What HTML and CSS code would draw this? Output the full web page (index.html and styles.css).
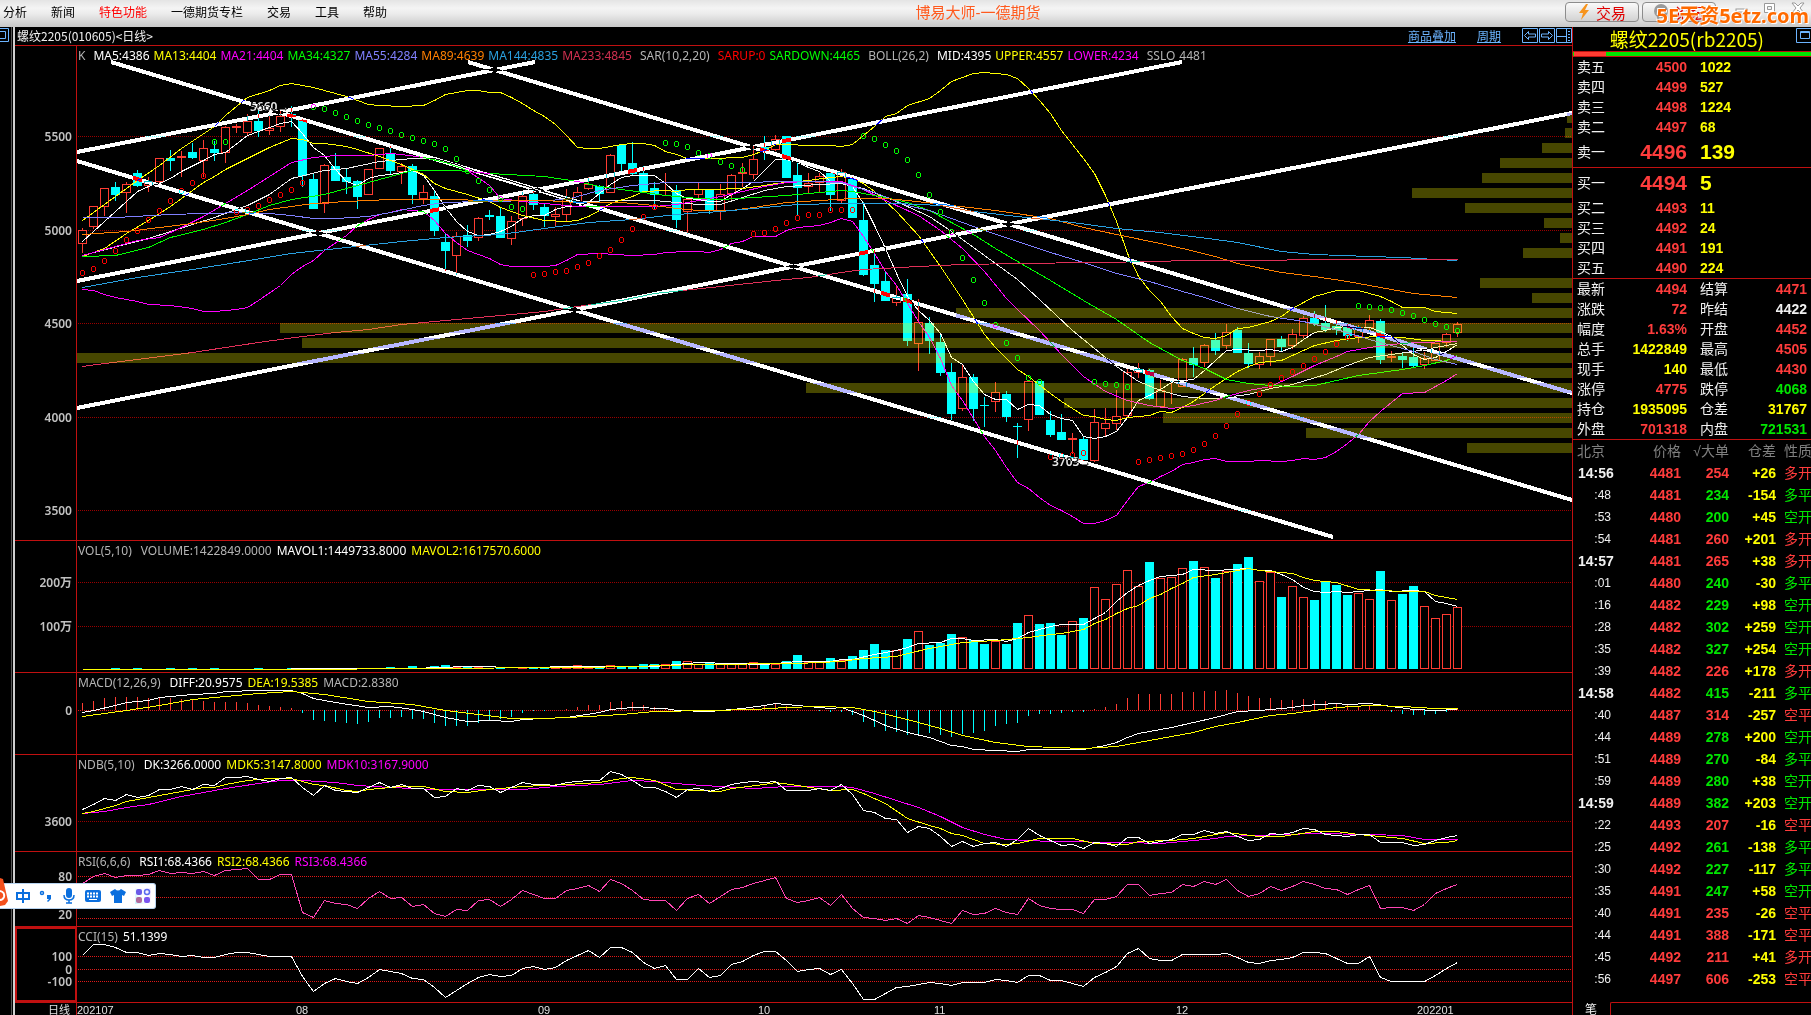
FILE: index.html
```html
<!DOCTYPE html>
<html lang="zh-CN">
<head>
    <meta charset="utf-8">
    <title>博易大师-一德期货</title>
    <link rel="stylesheet" href="styles.css">
</head>
<body>
    <header class="topbar">
        <nav class="menu">
            <a href="#">分析</a>
            <a href="#">新闻</a>
            <a href="#" class="hot">特色功能</a>
            <a href="#">一德期货专栏</a>
            <a href="#">交易</a>
            <a href="#">工具</a>
            <a href="#">帮助</a>
        </nav>
        <div class="app-title">博易大师-一德期货</div>
        <div class="top-actions">
            <button class="top-button" type="button">
                <svg width="12" height="16" viewBox="0 0 12 16"><path d="M8 0 1 9h4L3 16l8-10H7l3-6z" fill="#f7941d"/></svg>
                交易
            </button>
            <button class="top-button" type="button">
                <svg width="16" height="16" viewBox="0 0 16 16"><circle cx="8" cy="7" r="7" fill="#9a9a9a"/><path d="M4 12v4l4-3z" fill="#9a9a9a"/><path d="M5 8h6" stroke="#fff" stroke-width="2"/></svg>
                论坛
            </button>
            <div class="window-buttons">
                <button type="button" aria-label="最小化"><svg width="14" height="12" viewBox="0 0 14 12"><rect x="1" y="7" width="11" height="3" fill="#fff" stroke="#999"/></svg></button>
                <button type="button" aria-label="最大化"><svg width="14" height="12" viewBox="0 0 14 12"><path d="M1.500 1.500h10v9h-10zM4.500 4.500h4v3h-4z" fill="#fff" fill-rule="evenodd" stroke="#999"/></svg></button>
                <button type="button" aria-label="关闭"><svg width="14" height="12" viewBox="0 0 14 12"><path d="M1 1h3l3 3 3-3h3L9 6l4 5h-3L7 8l-3 3H1l4-5z" fill="#fff" stroke="#999"/></svg></button>
            </div>
        </div>
        <div class="watermark">5E天资5etz.com</div>
    </header>

    <div class="workspace">
        <!-- Collapsed side strip -->
        <aside class="strip">
            <svg width="10" height="16" viewBox="0 0 10 16"><path d="M0 1.500h8.500v13H0M0 4.500h5.500v7H0" fill="none" stroke="#6cb4ff"/></svg>
        </aside>

        <!-- Chart area -->
        <main class="charts">
            <div class="chart-head">
                <span>螺纹2205(010605)&lt;日线&gt;</span>
                <div class="chart-tools">
                    <a href="#">商品叠加</a>
                    <a href="#">周期</a>
                    <div class="tool-icons">
                        <button type="button" aria-label="上一个"><svg width="16" height="15" viewBox="0 0 16 15"><path d="M.5.5h15v14H.5zM2.500 7.500l4-4v2.500h7v3h-7v2.500z" fill="none" stroke="#6cb4ff"/></svg></button>
                        <button type="button" aria-label="下一个"><svg width="16" height="15" viewBox="0 0 16 15"><path d="M.5.5h15v14H.5zM13.500 7.500l-4-4v2.500h-7v3h7v2.500z" fill="none" stroke="#6cb4ff"/></svg></button>
                        <button type="button" aria-label="布局"><svg width="16" height="15" viewBox="0 0 16 15"><path d="M.5.5h15v14H.5zM10.500 1v13M1 8.500h9M12 3.500h2M12 6.500h2M12 9.500h2M12 12.500h2" fill="none" stroke="#6cb4ff"/></svg></button>
                    </div>
                </div>
            </div>

            <section class="panel panel-main">
                <div class="legend">
                    <span class="c-grey wide">K</span>
                    <span class="c-white">MA5:4386</span>
                    <span class="c-yellow">MA13:4404</span>
                    <span class="c-magenta">MA21:4404</span>
                    <span class="c-green">MA34:4327</span>
                    <span class="c-violet">MA55:4284</span>
                    <span class="c-orange">MA89:4639</span>
                    <span class="c-blue">MA144:4835</span>
                    <span class="c-crimson wide">MA233:4845</span>
                    <span class="c-grey wide">SAR(10,2,20)</span>
                    <span class="c-red">SARUP:0</span>
                    <span class="c-green wide">SARDOWN:4465</span>
                    <span class="c-grey wide">BOLL(26,2)</span>
                    <span class="c-white">MID:4395</span>
                    <span class="c-yellow">UPPER:4557</span>
                    <span class="c-magenta wide">LOWER:4234</span>
                    <span class="c-grey">SSLO</span>
                    <span class="c-grey">4481</span>
                </div>
                <svg id="main" viewBox="0 0 1557 494" preserveAspectRatio="none"></svg>
            </section>
            <section class="panel panel-vol">
                <div class="legend">
                    <span class="c-grey wide">VOL(5,10)</span>
                    <span class="c-grey">VOLUME:1422849.0000</span>
                    <span class="c-white">MAVOL1:1449733.8000</span>
                    <span class="c-yellow">MAVOL2:1617570.6000</span>
                </div>
                <svg id="vol" viewBox="0 0 1557 131" preserveAspectRatio="none"></svg>
            </section>
            <section class="panel panel-macd">
                <div class="legend">
                    <span class="c-grey wide">MACD(12,26,9)</span>
                    <span class="c-white">DIFF:20.9575</span>
                    <span class="c-yellow">DEA:19.5385</span>
                    <span class="c-grey">MACD:2.8380</span>
                </div>
                <svg id="macd" viewBox="0 0 1557 81" preserveAspectRatio="none"></svg>
            </section>
            <section class="panel panel-ndb">
                <div class="legend">
                    <span class="c-grey wide">NDB(5,10)</span>
                    <span class="c-white">DK:3266.0000</span>
                    <span class="c-yellow">MDK5:3147.8000</span>
                    <span class="c-magenta">MDK10:3167.9000</span>
                </div>
                <svg id="ndb" viewBox="0 0 1557 96" preserveAspectRatio="none"></svg>
            </section>
            <section class="panel panel-rsi">
                <div class="legend">
                    <span class="c-grey wide">RSI(6,6,6)</span>
                    <span class="c-white">RSI1:68.4366</span>
                    <span class="c-yellow">RSI2:68.4366</span>
                    <span class="c-magenta">RSI3:68.4366</span>
                </div>
                <svg id="rsi" viewBox="0 0 1557 74" preserveAspectRatio="none"></svg>
            </section>
            <section class="panel panel-cci">
                <div class="legend">
                    <span class="c-grey">CCI(15)</span>
                    <span class="c-white">51.1399</span>
                </div>
                <svg id="cci" viewBox="0 0 1557 75" preserveAspectRatio="none"></svg>
            </section>
            <div class="panel panel-dates">
                <svg id="dates" viewBox="0 0 1557 12" preserveAspectRatio="none"></svg>
            </div>
        </main>

        <!-- Quote panel -->
        <aside class="quote">
            <div class="quote-title">
                <h1>螺纹2205(rb2205)</h1>
                <svg width="16" height="15" viewBox="0 0 16 15"><path d="M.5.5h15v14H.5zM4.500 3.500h9v7h-9zM4 4.500h9" fill="none" stroke="#6cb4ff"/></svg>
            </div>
            <div class="ratio"><div class="ratio-red"></div></div>
            <table class="book">
                <tr><th>卖五</th><td class="price">4500</td><td class="lots">1022</td></tr>
                <tr><th>卖四</th><td class="price">4499</td><td class="lots">527</td></tr>
                <tr><th>卖三</th><td class="price">4498</td><td class="lots">1224</td></tr>
                <tr><th>卖二</th><td class="price">4497</td><td class="lots">68</td></tr>
                <tr class="best"><th>卖一</th><td class="price">4496</td><td class="lots">139</td></tr>
            </table>
            <table class="book">
                <tr class="best"><th>买一</th><td class="price">4494</td><td class="lots">5</td></tr>
                <tr><th>买二</th><td class="price">4493</td><td class="lots">11</td></tr>
                <tr><th>买三</th><td class="price">4492</td><td class="lots">24</td></tr>
                <tr><th>买四</th><td class="price">4491</td><td class="lots">191</td></tr>
                <tr><th>买五</th><td class="price">4490</td><td class="lots">224</td></tr>
            </table>
            <table class="stats">
                <tr><th>最新</th><td class="q-red">4494</td><th>结算</th><td class="q-red">4471</td></tr>
                <tr><th>涨跌</th><td class="q-red">72</td><th>昨结</th><td class="q-white">4422</td></tr>
                <tr><th>幅度</th><td class="q-red">1.63%</td><th>开盘</th><td class="q-red">4452</td></tr>
                <tr><th>总手</th><td class="q-yellow">1422849</td><th>最高</th><td class="q-red">4505</td></tr>
                <tr><th>现手</th><td class="q-yellow">140</td><th>最低</th><td class="q-red">4430</td></tr>
                <tr><th>涨停</th><td class="q-red">4775</td><th>跌停</th><td class="q-green">4068</td></tr>
                <tr><th>持仓</th><td class="q-yellow">1935095</td><th>仓差</th><td class="q-yellow">31767</td></tr>
                <tr><th>外盘</th><td class="q-red">701318</td><th>内盘</th><td class="q-green">721531</td></tr>
            </table>
            <table class="ticks">
                <thead>
                    <tr><th class="t-time">北京</th><th class="t-price">价格</th><th class="t-lots">√大单</th><th class="t-diff">仓差</th><th class="t-kind">性质</th></tr>
                </thead>
                <tbody id="ticks"></tbody>
            </table>
            <div class="quote-tabs"><span class="tab">笔</span><span class="tab-rest"></span></div>
        </aside>
    </div>

    <!-- Input method bar -->
    <div class="ime">
        <svg class="ime-logo" width="8" height="26" viewBox="0 0 8 26"><path d="M0-5 3-4l5 22-3 4-5 1z" fill="#f4511e"/><path d="M0 8q5 1 4 6-1 3-4 3" fill="none" stroke="#fff" stroke-width="2"/></svg>
        <button type="button" aria-label="中"><svg width="14" height="16" viewBox="0 0 14 16"><path d="M7 1v14M1 5h12v6H1z" fill="none" stroke="#0b6fde" stroke-width="2"/></svg></button>
        <button type="button" aria-label="标点"><svg width="14" height="16" viewBox="0 0 14 16"><circle cx="3" cy="5" r="1.500" fill="none" stroke="#0b6fde" stroke-width="1.500"/><path d="M8 7h4v4l-3 3-1-1 2-2H8z" fill="#0b6fde"/></svg></button>
        <button type="button" aria-label="语音"><svg width="14" height="16" viewBox="0 0 14 16"><rect x="4" y="0" width="6" height="10" rx="3" fill="#0b6fde"/><path d="M2 7q0 5 5 5t5-5M7 12v3M4 15h6" fill="none" stroke="#0b6fde" stroke-width="1.500"/></svg></button>
        <button type="button" aria-label="键盘"><svg width="16" height="16" viewBox="0 0 16 16"><rect x="0" y="2" width="16" height="12" rx="2" fill="#0b6fde"/><path d="M2 5.500h12M2 8.500h12" stroke="#fff" stroke-width="2" stroke-dasharray="2 1"/><path d="M4 11.500h8" stroke="#fff"/></svg></button>
        <button type="button" aria-label="皮肤"><svg width="16" height="16" viewBox="0 0 16 16"><path d="M5 1q3 3 6 0l5 3-2 4-2-1v8H4V7L2 8 0 4z" fill="#0b6fde"/></svg></button>
        <button type="button" class="ime-tools" aria-label="工具箱"><svg width="16" height="16" viewBox="0 0 16 16"><rect x="1" y="1" width="6" height="6" rx="2" fill="#6a5be8"/><circle cx="12" cy="4" r="2.500" fill="none" stroke="#5a6cf0" stroke-width="1.500"/><rect x="1" y="9" width="6" height="6" rx="2" fill="#b06a9c"/><rect x="9" y="9" width="6" height="6" rx="2" fill="#7a55f0"/></svg></button>
    </div>

    <script src="script.js"></script>
</body>
</html>
```

FILE: styles.css
```css
* {
    box-sizing: border-box;
}
body {
    margin: 0;
    height: 100vh;
    display: flex;
    flex-direction: column;
    overflow: hidden;
    background: #000;
    color: #f0f0f0;
    font-family: "Liberation Sans", "Noto Sans CJK SC", sans-serif;
    font-size: 12px;
}
button {
    font-family: inherit;
    padding: 0;
    border: 0;
    background: none;
    cursor: pointer;
}
svg {
    display: block;
}
table {
    border-collapse: separate;
    border-spacing: 0;
    table-layout: fixed;
    width: 100%;
}
th,
td {
    padding: 0;
    white-space: nowrap;
}

/* Top bar */
.topbar {
    position: relative;
    flex: none;
    height: 27px;
    display: flex;
    justify-content: space-between;
    background: linear-gradient(#e4e4e4, #f4f4f4 30%, #ececec 50%, #c8c8c8);
}
.menu {
    display: flex;
    gap: 24px;
    padding-left: 3px;
    line-height: 26px;
}
.menu a {
    color: #000;
    text-decoration: none;
}
.menu .hot {
    color: #f00;
}
.app-title {
    padding-left: 4px;
    font-size: 15px;
    line-height: 26px;
    color: #ff5a1e;
}
.top-actions {
    display: flex;
    gap: 3px;
    padding-top: 2px;
}
.top-button {
    display: flex;
    align-items: center;
    justify-content: center;
    gap: 6px;
    width: 74px;
    height: 20px;
    border: 1px solid #8c8c8c;
    border-radius: 4px;
    background: linear-gradient(#fafafa, #d2d2d2);
    color: #e00000;
    font-size: 15px;
}
.window-buttons {
    display: flex;
    gap: 14px;
    width: 92px;
    padding-left: 16px;
    align-items: flex-start;
}
.watermark {
    position: absolute;
    right: 2px;
    top: 3px;
    font-family: "Noto Sans", "Noto Sans CJK SC", sans-serif;
    font-size: 20px;
    line-height: 26px;
    font-weight: bold;
    color: #ff6a00;
    text-shadow: 1px 1px 0 #fff, -1px -1px 0 #fff;
}

/* Layout */
.workspace {
    flex: 1;
    display: flex;
    min-height: 0;
}
.strip {
    flex: none;
    width: 15px;
    border-right: 2px solid #d0d0d0;
    box-shadow: inset -1px 0 #000, inset -2px 0 #555;
}
.charts {
    flex: 1;
    min-width: 0;
    display: flex;
    flex-direction: column;
    border-right: 1px solid #c01010;
}
.chart-head {
    flex: none;
    height: 19px;
    display: flex;
    justify-content: space-between;
    padding-left: 2px;
    line-height: 18px;
    border-bottom: 1px solid #c01010;
    font-family: "Noto Sans CJK SC", sans-serif;
}
.chart-tools {
    display: flex;
    gap: 21px;
}
.chart-tools a {
    color: #6cb4ff;
}
.tool-icons {
    display: flex;
    gap: 1px;
    padding-top: 1px;
    align-items: flex-start;
}

/* Chart panels */
.panel {
    position: relative;
    min-height: 0;
    border-bottom: 1px solid #c01010;
}
.panel > svg {
    width: 100%;
    height: 100%;
}
.panel-main { flex: 494 0 0; }
.panel-vol { flex: 131 0 0; }
.panel-macd { flex: 81 0 0; }
.panel-ndb { flex: 96 0 0; }
.panel-rsi { flex: 74 0 0; }
.panel-cci { flex: 75 0 0; }
.panel-dates { flex: 12 0 0; border-bottom: 0; }
.legend {
    position: absolute;
    top: 0;
    left: 63px;
    display: flex;
    gap: 5px;
    line-height: 20px;
    font-family: "Noto Sans", sans-serif;
    white-space: nowrap;
}
.panel-main .legend {
    gap: 4px;
}
.legend .wide {
    margin-right: 4px;
}
.c-grey { color: #b4b4b4; }
.c-white { color: #fff; }
.c-yellow { color: #ff0; }
.c-magenta { color: #f0f; }
.c-green { color: #0f0; }
.c-violet { color: #8080ff; }
.c-orange { color: #ff8000; }
.c-blue { color: #2aa0e0; }
.c-crimson { color: #d03050; }
.c-red { color: #f00; }

/* Things drawn in the charts */
.panel svg * {
    shape-rendering: crispEdges;
}
.grid { stroke: #900; stroke-dasharray: 1 1; }
.grid-bright { stroke: #e01818; stroke-dasharray: 1 1; }
.axis { stroke: #c01010; }
.focus { fill: none; stroke: #c01010; stroke-width: 2; }
.line { fill: none; stroke-width: 1; }
.up { fill: #000; stroke: #ff3c32; }
.down { fill: #0ff; }
.wick-up { stroke: #ff3c32; }
.wick-down { stroke: #0ff; }
.profile { fill: rgba(255, 255, 0, 0.28); }
.trend { stroke: #fff; stroke-width: 4; mix-blend-mode: difference; }
.sar-up { fill: none; stroke: #f00; }
.sar-down { fill: none; stroke: #0f0; }
.tick-label {
    fill: #c0c0c0;
    font-family: "Noto Sans", "Noto Sans CJK SC", sans-serif;
    font-size: 12px;
    font-weight: 600;
    text-anchor: end;
}
.mark-label {
    fill: #e8e8e8;
    font-family: "Noto Sans", sans-serif;
    font-size: 12px;
    font-weight: 600;
}
.date-label {
    fill: #e0e0e0;
    font-family: "Liberation Sans", "Noto Sans CJK SC", sans-serif;
    font-size: 11px;
}

/* Quote panel */
.quote {
    flex: none;
    width: 238px;
    display: flex;
    flex-direction: column;
    overflow: hidden;
}
.quote-title {
    height: 24px;
    display: flex;
    justify-content: flex-end;
    gap: 32px;
    padding-top: 1px;
}
.quote-title h1 {
    margin: 0;
    font-family: "Noto Sans CJK SC", sans-serif;
    font-size: 19px;
    font-weight: normal;
    line-height: 22px;
    color: #ff0;
}
.quote-title svg {
    flex: none;
    margin-right: -1px;
}
.ratio {
    height: 6px;
    background: #00e600;
    border-top: 1px solid #c01010;
    border-bottom: 1px solid #c01010;
}
.ratio-red {
    width: 32px;
    height: 4px;
    margin-left: 1px;
    background: #ff3c32;
}
.book,
.stats {
    border-bottom: 1px solid #c01010;
}
.book tr,
.stats tr {
    height: 20px;
}
.book .best {
    height: 30px;
}
.quote th {
    width: 50px;
    padding-left: 4px;
    font-size: 14px;
    font-weight: normal;
    line-height: 16px;
    text-align: left;
}
.quote td {
    font-size: 14px;
    font-weight: bold;
    line-height: 16px;
    text-align: right;
}
.book .price {
    width: 64px;
    color: #ff3c3c;
}
.book .lots {
    padding-left: 13px;
    text-align: left;
    color: #ff0;
}
.book .best td {
    font-size: 21px;
}
.stats td:nth-child(2) {
    width: 64px;
}
.stats th:nth-child(3) {
    padding-left: 13px;
}
.stats td:nth-child(4) {
    padding-right: 4px;
}
.q-red { color: #ff3c3c; }
.q-yellow { color: #ff0; }
.q-green { color: #00e600; }
.q-white { color: #f0f0f0; }

.ticks tr {
    height: 22px;
}
.ticks thead th {
    padding-left: 0;
    color: #808080;
    text-align: right;
}
.ticks thead .t-time {
    width: 38px;
    padding-left: 4px;
    text-align: left;
}
.ticks td.t-time {
    padding-left: 5px;
    text-align: left;
}
.ticks td.t-second {
    font-size: 12px;
    font-weight: normal;
    text-align: right;
}
.ticks .t-price { width: 70px; }
.ticks .t-lots { width: 48px; }
.ticks .t-diff { width: 47px; }
.ticks thead .t-kind,
.ticks td.t-kind {
    width: 35px;
    padding-left: 8px;
    font-weight: normal;
    text-align: left;
}
.quote-tabs {
    flex: 1;
    display: flex;
    align-items: stretch;
    padding-top: 12px;
    min-height: 0;
    overflow: hidden;
}
.tab {
    width: 37px;
    padding-left: 12px;
    font-size: 12px;
    line-height: 16px;
}
.tab-rest {
    flex: 1;
    border-top: 1px solid #c01010;
    border-left: 1px solid #c01010;
    border-top-left-radius: 2px;
}

/* Input method bar */
.ime {
    position: absolute;
    left: 0;
    top: 883px;
    display: flex;
    align-items: center;
    gap: 9px;
    height: 26px;
    padding-right: 4px;
    border: 1px solid #b8d4f0;
    border-left: 0;
    border-radius: 0 3px 3px 0;
    background: #fff;
}
.ime-logo {
    overflow: visible;
    margin-right: -1px;
}
.ime-tools {
    background: linear-gradient(60deg, #c8f4ff, #fff 50%, #f4e8ff);
}
```

FILE: script.js
```js
const STEP = 11;        // distance between two bars
const FIRST = 67.5;     // centre of the first bar
const PLOT_LEFT = 61.5; // vertical axis

// Levels are kept in thirds of a pixel. top is the level of a panel's upper edge.
const TOP = { main: 138, vol: 33, macd: 429, ndb: 675, rsi: 966, cci: 1191 };

const X = i => FIRST + STEP * i;
const Y = (panel, v) => Math.floor((v - TOP[panel]) / 3) + 0.5;

// Candles: direction, high, body top, body bottom, low
const candles = `
r 685 690 731 756|r 619 619 680 686|r 565 565 619 645|c 546 561 584 600|r 547 552 577 636|c 510 519 557 560
r 533 543 556 575|r 475 475 545 548|c 452 474 482 510|r 454 469 471 528|c 430 456 473 474|r 422 445 481 530
c 425 447 456 480|r 378 382 457 486|r 372 380 382 396|r 342 364 398 403|c 330 363 390 410|r 345 385 392 402
r 335 349 380 393|c 320 342 350 380|c 358 362 527 560|c 520 538 624 624|r 492 496 610 636|c 459 498 540 540
c 504 531 545 579|c 540 543 590 624|r 508 508 583 584|r 445 445 505 505|c 440 460 510 521|r 490 499 515 549
c 492 498 584 609|r 556 577 594 611|c 570 588 692 705|c 700 726 752 812|r 696 710 766 822|c 675 705 720 738
r 651 655 713 720|c 630 646 649 658|c 625 648 711 713|r 648 664 716 732|r 576 588 655 677|c 572 582 614 627
c 609 621 647 678|r 622 643 650 675|r 567 598 644 660|r 561 577 603 605|r 532 553 566 569|c 556 559 579 605
r 462 466 578 578|c 432 437 491 510|c 426 489 521 522|c 500 519 573 575|c 547 564 584 625|r 519 582 584 584
c 556 571 657 681|r 597 597 634 700|r 548 568 584 600|c 567 570 627 640|r 552 582 633 657|r 522 526 580 600
r 491 517 520 560|r 440 478 524 535|c 408 443 450 478|r 405 418 448 450|c 408 408 531 531|c 489 525 563 645
r 519 550 558 580|r 519 530 548 577|c 517 519 584 630|r 507 517 602 606|c 531 537 651 651|c 606 660 822 825
c 750 795 849 903|c 815 843 900 900|r 857 892 906 915|c 837 882 1020 1035|r 897 967 1031 1110|c 951 969 1020 1060
c 1000 1026 1116 1125|c 1090 1116 1239 1257|r 1095 1132 1225 1230|c 1122 1131 1224 1262|c 1191 1215 1217 1278
r 1146 1177 1204 1233|c 1173 1182 1248 1263|c 1270 1278 1280 1371|r 1144 1144 1258 1290|c 1143 1143 1242 1242
c 1233 1260 1302 1308|c 1242 1296 1317 1317|r 1299 1315 1317 1360|c 1310 1317 1377 1380|r 1227 1267 1382 1385
r 1224 1270 1286 1305|r 1170 1248 1271 1287|r 1107 1117 1247 1250|r 1089 1107 1117 1132|c 1107 1110 1194 1197
r 1140 1170 1220 1222|r 1145 1161 1162 1210|r 1075 1078 1160 1160|c 1041 1074 1092 1128|r 1032 1036 1088 1098
c 1000 1020 1050 1064|r 972 997 1037 1044|c 982 990 1056 1058|c 1029 1059 1089 1101|r 1056 1069 1093 1104
r 1018 1018 1070 1095|c 1008 1018 1038 1050|r 987 1002 1035 1045|r 950 955 1006 1012|c 935 954 969 975
c 915 969 987 995|c 960 978 988 1003|c 970 983 1007 1022|r 975 983 1010 1026|r 946 961 982 994|c 957 963 1079 1090
r 1055 1070 1072 1083|c 1056 1070 1077 1102|c 1044 1071 1095 1101|r 1056 1074 1092 1104|r 1030 1030 1082 1082
r 1000 1003 1028 1038|r 967 973 998 1010`.trim().split(/[|\n]/).map(row => {
    const [dir, ...levels] = row.split(' ');
    return [dir, ...levels.map(Number)];
});

// Lines: bar index and level, in pairs
const mainLines = [
    ['#ff0', '0 662 5 542 7 495 9 444 12 378 13 347 14 318 15 292 17 271 18 257 19 250 21 262 23 279 24 289 25 302 26 312 27 316 29 319 31 316 32 302 33 284 35 271 36 271 37 277 38 277 39 292 40 310 41 331 42 348 43 372 44 405 45 441 46 444 47 444 48 440 49 432 50 430 51 430 52 436 53 453 54 464 55 474 57 474 60 471 61 463 62 450 63 432 64 432 66 436 68 436 69 439 70 433 71 406 72 378 73 349 74 340 75 316 77 295 78 270 79 244 81 220 82 217 84 222 85 235 86 265 87 300 88 339 89 390 90 434 91 475 92 520 93 585 94 665 95 760 96 830 97 872 98 905 99 948 100 985 101 1000 102 1011 103 1016 104 1007 105 986 106 982 108 963 109 948 110 925 112 890 114 870 116 870 117 880 118 890 119 905 120 922 122 922 123 933 125 939'],
    ['#f0f', '0 868 1 870 2 882 3 891 5 905 6 914 8 917 10 925 11 934 12 934 14 928 15 922 16 901 18 855 19 823 20 798 21 780 22 750 24 705 25 677 26 658 27 643 28 637 29 629 31 634 32 661 33 700 34 727 35 751 37 776 38 793 39 799 42 799 43 796 44 780 45 763 47 760 50 766 52 763 53 757 55 755 56 753 57 757 58 748 59 731 60 725 61 709 63 709 64 691 65 682 67 676 68 666 69 656 70 664 71 710 72 760 73 815 74 856 75 910 76 965 77 1012 78 1075 79 1155 80 1200 81 1255 82 1310 83 1352 84 1402 85 1446 86 1465 87 1491 88 1515 89 1530 90 1550 91 1569 92 1569 93 1562 94 1545 95 1500 96 1460 97 1447 98 1430 99 1413 100 1394 101 1387 102 1378 103 1376 104 1384 106 1384 107 1382 109 1384 110 1381 111 1376 112 1378 113 1372 114 1354 115 1330 116 1303 117 1263 118 1235 119 1208 120 1181 122 1177 123 1158 124 1140 125 1120'],
    ['#eee', '0 765 6 716 12 653 15 617 17 583 19 535 22 512 24 505 27 484 30 475 32 475 34 492 36 516 39 545 41 566 43 585 45 603 49 600 52 602 54 608 56 614 58 613 60 593 62 571 64 560 67 553 69 550 71 565 74 603 77 650 79 695 82 765 85 838 87 898 90 990 92 1045 94 1098 96 1145 98 1170 100 1188 102 1194 103 1195 106 1183 108 1165 110 1152 113 1123 115 1095 117 1072 119 1062 121 1053 123 1043 125 1031'],
    ['#fff', '0 724 2 665 3 634 4 603 5 575 6 560 7 550 8 534 9 515 11 481 12 464 13 456 15 406 17 381 18 370 19 364 20 400 21 443 22 466 23 507 24 545 25 557 26 536 27 527 28 524 29 517 30 510 31 525 32 570 33 622 34 664 35 693 36 707 37 702 38 693 39 680 40 655 41 646 42 646 43 628 44 620 45 618 46 608 47 580 48 552 49 533 50 526 52 527 53 551 54 580 55 596 56 597 57 603 58 605 59 584 60 566 61 545 62 512 63 478 64 478 65 487 66 502 67 515 68 545 69 550 70 560 71 610 72 675 73 745 74 820 75 890 76 930 77 960 78 1000 79 1072 80 1093 81 1143 82 1183 83 1198 84 1198 85 1228 86 1213 87 1216 88 1242 89 1254 90 1261 91 1308 92 1314 93 1309 94 1293 95 1252 96 1200 97 1187 98 1168 99 1148 100 1141 101 1137 102 1110 103 1080 104 1050 105 1047 107 1052 108 1047 109 1054 110 1043 111 1018 112 998 113 990 114 982 115 980 116 985 117 982 118 995 119 1010 120 1035 121 1062 122 1078 123 1073 124 1055 125 1032'],
    ['#ff0', '0 768 2 745 4 700 6 660 8 620 9 595 10 570 11 548 12 530 13 509 15 475 17 442 19 415 20 418 21 430 22 431 24 440 25 447 27 468 29 492 31 524 32 551 33 566 35 582 37 604 38 622 39 635 40 647 42 662 44 664 45 660 46 648 47 632 48 610 50 588 51 574 53 572 54 574 55 569 57 569 60 565 62 557 63 550 66 540 68 531 69 528 70 535 71 550 72 575 73 605 74 635 76 705 78 800 80 898 82 1003 83 1043 85 1108 86 1130 88 1180 89 1205 91 1247 92 1249 93 1257 94 1261 95 1252 97 1245 98 1234 99 1237 100 1223 101 1205 103 1155 104 1135 105 1113 106 1100 107 1087 109 1081 111 1050 112 1036 114 1020 116 1013 118 1009 120 1012 122 1020 125 1024'],
    ['#f0f', '0 765 5 722 7 712 9 683 11 648 13 610 15 572 17 530 19 487 21 472 23 466 26 466 28 460 29 463 31 471 33 488 35 512 37 555 38 594 40 603 43 612 45 618 52 620 54 613 56 600 58 590 60 575 62 560 64 548 66 543 69 545 71 568 73 602 75 630 76 645 78 690 80 745 82 815 84 895 85 927 87 990 89 1062 91 1130 93 1175 95 1200 97 1216 99 1225 101 1216 103 1200 104 1188 106 1170 108 1158 110 1130 112 1095 114 1068 115 1055 117 1042 119 1032 121 1027 125 1025'],
    ['#0f0', '0 769 3 765 6 742 8 713 11 688 13 667 15 643 17 617 19 598 22 582 24 566 26 548 28 529 30 512 34 512 37 520 42 530 45 545 47 560 49 567 51 578 53 585 56 594 58 597 61 593 64 585 67 578 69 572 70 573 73 592 75 608 77 630 79 668 81 702 83 745 85 785 88 840 91 900 94 958 97 1027 100 1080 102 1104 104 1137 106 1149 108 1155 110 1159 112 1155 114 1140 116 1127 118 1116 120 1108 122 1096 124 1080 125 1067'],
    ['#8080ff', '0 653 3 652 8 642 11 640 15 636 17 639 19 647 21 655 23 655 26 649 28 636 31 615 33 608 36 605 42 600 44 597 47 572 50 555 53 548 58 546 66 543 69 548 70 558 72 578 75 615 77 630 79 655 82 690 85 725 88 757 91 787 94 820 97 845 100 875 102 892 105 925 108 950 111 965 115 998 117 1018 119 1037 121 1055 123 1078 125 1093'],
    ['#ff8000', '0 704 4 694 7 683 10 670 13 655 15 643 17 629 19 619 21 609 24 604 28 597 33 598 37 600 42 601 45 606 49 606 52 615 54 626 56 631 59 630 61 622 64 606 67 600 70 594 73 594 75 600 79 616 83 632 88 655 91 683 94 703 98 730 100 745 103 770 105 790 109 817 112 829 115 843 118 862 121 881 125 892'],
    ['#2aa0e0', '0 862 5 832 10 808 14 786 19 760 24 742 29 725 33 713 38 702 42 686 46 668 50 657 54 644 58 633 62 622 65 614 69 610 74 610 78 617 81 633 85 648 90 667 94 686 98 698 103 718 105 728 109 754 112 762 117 769 120 772 123 779 125 780'],
    ['#e03058', '0 1100 2 1090 5 1078 10 1057 16 1027 20 1010 23 997 26 989 29 972 33 962 38 947 42 935 45 918 49 900 52 881 58 860 63 840 66 833 69 818 71 809 76 800 80 792 85 789 92 787 98 783 100 781 109 781 110 778 125 778']
];

// SAR dots: direction, first bar, then one level for each bar
const sar = [
    ['up', 0, '817 805 782 751 718 690 658 631 601 571 547 526'],
    ['down', 12, '424 424'],
    ['up', 14, '634 628 617 598 583 568 547'],
    ['down', 21, '319 325 337 349 361 373 382 391 403 412 421 430 445 475 511 541 568 595 619 625'],
    ['up', 41, '823 820 814 811 799 787 766 748 718 685 649 619'],
    ['down', 53, '427 430 439 457 467 484 496 508'],
    ['up', 61, '700 697 685 667 652 643 643 628 628 628'],
    ['down', 71, '406 415 433 451 478 523 583 634 694 772 838 907 974 1027 1072 1132 1145'],
    ['up', 88, '1369 1366 1363 1357'],
    ['down', 92, '1144 1150 1153 1159'],
    ['up', 96, '1384 1378 1372 1366 1360 1348 1330 1306 1276 1240 1207 1181 1153 1132 1114 1096 1075 1054 1030 1010'],
    ['down', 116, '916 919 922 928 937 946 958 970 979 991']
];

// Price/volume profile: y and length
const profile = [
    [67, 5], [82, 7], [97, 30], [112, 72], [127, 90], [142, 160], [157, 107], [172, 28], [187, 12], [202, 49],
    [232, 92], [247, 40], [262, 616], [277, 1292], [292, 1270], [307, 1495], [322, 424], [337, 766], [352, 508],
    [367, 409], [382, 266], [397, 105]
];

// Hand-drawn trend lines
const trends = [
    [96, 16, 1557, 454], [62, 115, 1318, 491], [453, 16, 1557, 347],
    [62, 106, 520, 16], [62, 235, 1167, 16], [62, 362, 1557, 67]
];

const volume = '414 414 414 414 414 414 414 414 414 414 414 414 414 414 414 414 414 414 414 414 414 414 414 414 414 414 414 414 411 414 408 414 408 405 411 412 412 414 412 414 411 411 411 409 409 405 410 411 406 410 411 402 402 403 393 394 402 397 401 403 402 397 405 404 393 375 397 397 384 391 378 360 342 360 361 327 304 345 339 312 322 330 342 333 342 279 256 282 279 315 274 264 172 208 163 121 169 96 145 142 115 93 112 144 124 102 81 154 127 201 169 202 210 153 165 195 190 208 123 211 192 168 229 265 253 232';
const volumeLines = [
    ['#fff', '0 417 18 418 20 416 30 414 35 408 40 412 45 410 48 409 52 408 56 398 62 402 65 395 68 393 69 388 70 388 72 374 74 362 75 352 76 341 78 338 79 326 80 325 81 331 83 328 84 333 85 324 86 308 88 288 89 283 91 283 92 264 93 247 94 215 95 186 96 165 97 150 98 139 100 134 101 119 103 121 106 115 107 121 108 120 109 133 110 149 111 172 112 184 113 186 114 183 115 187 117 182 118 178 119 184 121 182 122 185 123 214 124 220 125 229'],
    ['#ff0', '0 418 20 418 30 415 45 411 50 409 56 403 65 399 69 395 71 385 74 378 75 370 77 355 78 350 80 338 83 332 86 322 88 312 89 310 91 298 92 279 93 267 94 250 95 236 96 226 97 205 98 193 99 175 100 160 101 142 103 132 105 122 106 115 107 122 110 130 111 142 112 150 114 158 116 178 118 180 120 184 122 184 123 197 125 208']
];

const macdBars = '519 513 504 502 502 502 504 502 505 507 511 513 516 516 516 519 525 528 531 534 549 570 573 576 579 582 576 564 564 561 567 567 579 588 588 588 579 570 567 561 549 543 542 541 537 531 525 525 516 513 516 525 531 534 543 543 542 545 543 541 537 534 528 520 529 538 541 542 546 546 555 576 591 603 606 615 612 609 615 621 612 609 603 588 582 579 558 552 552 549 546 546 537 531 522 504 492 492 492 492 486 486 483 483 481 489 498 504 504 510 510 507 510 513 519 525 531 528 541 546 552 555 555 552 546 538';
const macdLines = [
    ['#fff', '0 548 1 541 3 526 4 517 6 511 7 502 10 493 12 490 13 484 16 481 19 482 20 491 21 505 23 517 26 532 28 530 30 537 31 543 33 562 35 574 37 571 39 574 40 568 44 562 47 547 48 538 50 533 53 535 54 541 57 545 60 535 62 527 63 521 65 526 67 531 68 535 69 532 70 543 71 557 73 585 75 607 77 622 79 646 80 650 81 658 85 663 86 657 89 658 91 658 93 646 94 637 95 622 96 610 99 593 103 562 105 545 107 541 110 533 111 526 114 520 115 523 117 520 119 529 121 538 123 540 125 537'],
    ['#ff0', '0 560 4 541 7 526 10 509 13 499 16 490 19 485 22 494 26 514 30 523 33 541 36 554 39 565 42 566 46 560 49 553 52 545 57 542 61 539 64 532 67 529 70 532 72 544 75 568 78 595 80 616 83 636 86 649 91 655 94 650 97 632 101 607 103 590 105 577 108 556 110 550 112 541 114 533 117 526 120 529 123 534 125 535']
];

const ndbLines = [
    ['#f0f', '0 850 2 845 4 832 6 823 9 799 11 787 13 775 16 760 18 752 20 751 23 757 25 766 28 772 32 778 37 779 40 779 43 770 47 763 50 751 52 754 55 763 58 770 61 775 64 769 69 769 70 772 72 790 74 812 76 832 78 860 80 891 82 912 84 928 88 933 95 936 98 940 103 926 104 919 112 911 117 912 120 917 122 928 125 928'],
    ['#ff0', '0 850 1 844 3 826 4 814 6 802 9 784 11 772 12 771 13 763 15 751 17 745 19 745 21 763 22 765 24 782 25 784 26 778 29 769 31 769 33 784 35 787 37 779 40 769 44 763 47 757 49 745 50 742 52 751 54 778 58 784 59 776 62 763 63 756 65 766 68 781 70 778 71 791 73 821 75 865 77 886 78 895 79 910 80 916 82 940 84 944 85 940 87 926 90 926 92 941 95 943 96 935 99 931 101 925 104 906 107 919 109 919 112 904 114 904 116 912 118 919 120 925 122 940 124 937 125 931'],
    ['#fff', '0 839 1 823 2 805 3 811 4 793 5 802 6 796 7 778 8 778 9 769 10 778 11 763 12 766 13 742 14 742 15 739 16 748 17 754 18 744 19 742 20 771 21 796 22 766 23 781 24 784 25 787 26 772 27 757 28 772 29 763 30 775 31 776 32 802 33 800 34 776 35 780 36 766 37 769 38 787 39 772 40 757 41 763 42 763 43 766 44 757 45 755 46 752 47 751 48 724 49 733 50 751 51 772 52 772 53 785 54 802 55 778 56 775 57 784 58 775 59 763 60 757 61 754 62 757 63 754 64 781 66 781 67 775 68 781 69 763 70 793 71 842 72 848 73 865 74 868 75 907 76 889 77 895 78 919 79 949 80 934 81 949 82 940 83 938 84 949 85 928 86 895 87 916 88 931 89 946 90 943 91 955 92 937 93 941 94 949 95 922 96 922 97 940 98 934 99 929 100 913 101 913 102 901 103 909 104 904 105 920 106 931 107 928 108 910 109 913 110 907 111 895 112 898 113 913 115 919 116 912 117 912 118 937 120 937 121 946 122 943 123 931 124 922 125 916']
];

const rsi = '1060 1039 1030 1042 1036 1036 1033 1021 1030 1027 1030 1024 1036 1021 1018 1015 1048 1048 1033 1033 1147 1162 1111 1120 1123 1135 1105 1084 1105 1103 1129 1123 1150 1159 1138 1141 1111 1108 1129 1109 1081 1093 1105 1105 1081 1076 1066 1084 1048 1060 1081 1108 1111 1111 1141 1105 1093 1120 1099 1078 1073 1060 1051 1043 1105 1117 1111 1102 1126 1093 1135 1162 1165 1171 1165 1180 1156 1162 1171 1180 1141 1153 1150 1135 1147 1153 1105 1127 1136 1138 1138 1150 1108 1108 1099 1063 1063 1096 1090 1087 1063 1069 1054 1062 1048 1081 1099 1090 1070 1081 1069 1054 1063 1075 1078 1093 1078 1067 1135 1132 1132 1141 1123 1090 1075 1063';
const cci = '1277 1243 1243 1252 1267 1267 1276 1270 1273 1278 1276 1282 1282 1273 1267 1267 1273 1279 1279 1279 1340 1384 1360 1345 1354 1360 1342 1318 1324 1330 1345 1348 1372 1402 1381 1360 1342 1333 1339 1336 1315 1310 1318 1312 1291 1276 1261 1282 1252 1252 1268 1298 1315 1306 1348 1348 1315 1342 1336 1303 1294 1276 1264 1264 1291 1324 1318 1315 1333 1318 1360 1408 1408 1390 1372 1369 1363 1357 1360 1366 1357 1357 1357 1348 1351 1357 1336 1336 1351 1351 1360 1369 1342 1327 1309 1270 1255 1285 1291 1291 1273 1273 1273 1273 1270 1282 1297 1300 1291 1288 1282 1267 1267 1270 1285 1300 1300 1279 1342 1354 1354 1354 1354 1336 1315 1297';

// Ticks: time, price, lots, change in open interest, kind, colour of the kind
const ticks = [
    ['14:56', 4481, 254, '+26', '多开', 'red'], [':48', 4481, 234, '-154', '多平', 'green'],
    [':53', 4480, 200, '+45', '空开', 'green'], [':54', 4481, 260, '+201', '多开', 'red'],
    ['14:57', 4481, 265, '+38', '多开', 'red'], [':01', 4480, 240, '-30', '多平', 'green'],
    [':16', 4482, 229, '+98', '空开', 'green'], [':28', 4482, 302, '+259', '空开', 'green'],
    [':35', 4482, 327, '+254', '空开', 'green'], [':39', 4482, 226, '+178', '多开', 'red'],
    ['14:58', 4482, 415, '-211', '多平', 'green'], [':40', 4487, 314, '-257', '空平', 'red'],
    [':44', 4489, 278, '+200', '空开', 'green'], [':51', 4489, 270, '-84', '多平', 'green'],
    [':59', 4489, 280, '+38', '空开', 'green'], ['14:59', 4489, 382, '+203', '空开', 'green'],
    [':22', 4493, 207, '-16', '空平', 'red'], [':25', 4492, 261, '-138', '多平', 'green'],
    [':30', 4492, 227, '-117', '多平', 'green'], [':35', 4491, 247, '+58', '空开', 'green'],
    [':40', 4491, 235, '-26', '空平', 'red'], [':44', 4491, 388, '-171', '空平', 'red'],
    [':45', 4492, 211, '+41', '多开', 'red'], [':56', 4497, 606, '-253', '空平', 'red']
];

const numbers = text => text.split(' ').map(Number);

function polyline(panel, color, pairs) {
    const v = typeof pairs === 'string' ? numbers(pairs) : pairs;
    let points = '';
    for (let k = 0; k < v.length; k += 2) {
        points += `${X(v[k])},${Y(panel, v[k + 1])} `;
    }
    return `<polyline class="line" stroke="${color}" points="${points}"/>`;
}

function everyBar(text) {
    return numbers(text).flatMap((v, i) => [i, v]);
}

function gridLine(y, bright) {
    return `<line class="${bright ? 'grid-bright' : 'grid'}" x1="63" x2="1557" y1="${y}.5" y2="${y}.5"/>`;
}

function axis(height, labels) {
    return `<line class="axis" x1="${PLOT_LEFT}" x2="${PLOT_LEFT}" y1="0" y2="${height}"/>` +
        labels.map(([y, text]) => `<text class="tick-label" x="57" y="${y + 5}">${text}</text>`).join('');
}

function bar(i, dir, top, bottom) {
    if (dir === 'r') {
        return `<rect class="up" x="${X(i) - 4}" y="${top}" width="8" height="${bottom - top}"/>`;
    }
    return `<rect class="down" x="${X(i) - 4.5}" y="${top - 0.5}" width="9" height="${bottom - top + 1}"/>`;
}

function drawMain() {
    let out = [90, 184, 277, 371, 464].map(y => gridLine(y)).join('');
    candles.forEach(([dir, high, top, bottom, low], i) => {
        const wick = dir === 'r' ? 'wick-up' : 'wick-down';
        out += `<line class="${wick}" x1="${X(i)}" x2="${X(i)}" y1="${Y('main', high) - 0.5}" y2="${Y('main', low) + 0.5}"/>`;
        out += bar(i, dir, Y('main', top), Y('main', bottom));
    });
    mainLines.forEach(([color, pairs]) => { out += polyline('main', color, pairs); });
    profile.forEach(([y, w]) => {
        out += `<rect class="profile" x="${1557 - w}" y="${y}" width="${w}" height="10"/>`;
    });
    sar.forEach(([dir, start, levels]) => {
        numbers(levels).forEach((v, k) => {
            out += `<rect class="sar-${dir}" x="${X(start + k) - 2}" y="${Y('main', v) - 2}" width="4" height="5" rx="2"/>`;
        });
    });
    out += '<text class="mark-label" x="235" y="65">5660→</text>';
    out += '<text class="mark-label" x="1037" y="420">3703→</text>';
    trends.forEach(([x1, y1, x2, y2]) => {
        out += `<line class="trend" x1="${x1}" y1="${y1}" x2="${x2}" y2="${y2}"/>`;
    });
    out += axis(494, [[90, '5500'], [184, '5000'], [277, '4500'], [371, '4000'], [464, '3500']]);
    document.getElementById('main').innerHTML = out;
}

function drawVolume() {
    let out = gridLine(41) + gridLine(85);
    numbers(volume).forEach((v, i) => {
        out += bar(i, candles[i][0], Y('vol', v), Y('vol', 415));
    });
    volumeLines.forEach(([color, pairs]) => { out += polyline('vol', color, pairs); });
    out += axis(131, [[41, '200万'], [85, '100万']]);
    document.getElementById('vol').innerHTML = out;
}

function drawMacd() {
    let out = gridLine(37, true);
    numbers(macdBars).forEach((v, i) => {
        out += `<line class="${v < 541 ? 'wick-up' : 'wick-down'}" x1="${X(i)}" x2="${X(i)}" y1="37" y2="${(v - 429) / 3}"/>`;
    });
    macdLines.forEach(([color, pairs]) => { out += polyline('macd', color, pairs); });
    out += axis(81, [[37, '0']]);
    document.getElementById('macd').innerHTML = out;
}

function drawLines() {
    document.getElementById('ndb').innerHTML = gridLine(66) +
        ndbLines.map(([color, pairs]) => polyline('ndb', color, pairs)).join('') + axis(96, [[66, '3600']]);

    document.getElementById('rsi').innerHTML = [24, 45, 66].map(y => gridLine(y, true)).join('') +
        polyline('rsi', '#ff46b4', everyBar(rsi)) + axis(74, [[24, '80'], [62, '20']]);

    document.getElementById('cci').innerHTML = [29, 42, 54].map(y => gridLine(y, true)).join('') +
        polyline('cci', '#fff', everyBar(cci)) + axis(75, [[29, '100'], [42, '0'], [54, '-100']]) +
        '<rect class="focus" x="1" y="1" width="60" height="73"/>';
}

function drawDates() {
    const dates = [[33, '日线'], [62, '202107'], [281, '08'], [523, '09'], [743, '10'], [919, '11'], [1161, '12'], [1402, '202201']];
    document.getElementById('dates').innerHTML = axis(12, []) +
        dates.map(([x, text]) => `<text class="date-label" x="${x}" y="11">${text}</text>`).join('');
}

function drawTicks() {
    document.getElementById('ticks').innerHTML = ticks.map(([time, price, lots, diff, kind, color]) => `
        <tr>
            <td class="t-time q-white ${time.length < 5 ? 't-second' : ''}">${time}</td>
            <td class="t-price q-red">${price}</td>
            <td class="t-lots q-${color}">${lots}</td>
            <td class="t-diff q-yellow">${diff}</td>
            <td class="t-kind q-${color}">${kind}</td>
        </tr>`).join('');
}

drawMain();
drawVolume();
drawMacd();
drawLines();
drawDates();
drawTicks();
```
